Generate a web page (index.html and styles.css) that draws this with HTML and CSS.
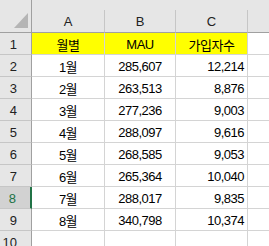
FILE: index.html
```html
<!DOCTYPE html>
<html lang="ko">
<head>
    <meta charset="UTF-8">
    <title>월별 MAU</title>
    <link rel="stylesheet" href="styles.css">
</head>
<body>
    <div class="sheet">
        <div class="corner">
            <svg width="14" height="15" viewBox="0 0 14 15"><polygon points="14,0 14,15 0,15" fill="#b5b5b5"/></svg>
        </div>
        <div class="colhead">A</div>
        <div class="colhead">B</div>
        <div class="colhead">C</div>
        <div class="colhead last"></div>

        <div class="rowhead">1</div>
        <div class="cell title">월별</div>
        <div class="cell title">MAU</div>
        <div class="cell title">가입자수</div>
        <div class="cell last"></div>

        <div class="rowhead">2</div>
        <div class="cell mid">1월</div>
        <div class="cell mid">285,607</div>
        <div class="cell num">12,214</div>
        <div class="cell last"></div>

        <div class="rowhead">3</div>
        <div class="cell mid">2월</div>
        <div class="cell mid">263,513</div>
        <div class="cell num">8,876</div>
        <div class="cell last"></div>

        <div class="rowhead">4</div>
        <div class="cell mid">3월</div>
        <div class="cell mid">277,236</div>
        <div class="cell num">9,003</div>
        <div class="cell last"></div>

        <div class="rowhead">5</div>
        <div class="cell mid">4월</div>
        <div class="cell mid">288,097</div>
        <div class="cell num">9,616</div>
        <div class="cell last"></div>

        <div class="rowhead">6</div>
        <div class="cell mid">5월</div>
        <div class="cell mid">268,585</div>
        <div class="cell num">9,053</div>
        <div class="cell last"></div>

        <div class="rowhead">7</div>
        <div class="cell mid">6월</div>
        <div class="cell mid">265,364</div>
        <div class="cell num">10,040</div>
        <div class="cell last"></div>

        <div class="rowhead active">8</div>
        <div class="cell mid">7월</div>
        <div class="cell mid">288,017</div>
        <div class="cell num">9,835</div>
        <div class="cell last"></div>

        <div class="rowhead">9</div>
        <div class="cell mid">8월</div>
        <div class="cell mid">340,798</div>
        <div class="cell num">10,374</div>
        <div class="cell last"></div>

        <div class="rowhead">10</div>
        <div class="cell"></div>
        <div class="cell"></div>
        <div class="cell"></div>
        <div class="cell last"></div>
    </div>
</body>
</html>
```

FILE: styles.css
```css
html, body {
    margin: 0;
    padding: 0;
    background: #ffffff;
    overflow: hidden;
}
.sheet {
    display: grid;
    grid-template-columns: 32px 73px 71px 72px 1fr;
    grid-template-rows: 33px repeat(10, 22px);
    width: 269px;
    background: #e6e6e6;
    font-family: "Liberation Sans", "Noto Sans CJK KR", sans-serif;
    font-size: 13px;
    letter-spacing: -0.5px;
    color: #000000;
}
.corner {
    background: #e6e6e6;
    border-right: 1px solid #a0a0a0;
    border-bottom: 1px solid #a0a0a0;
    display: flex;
    justify-content: flex-end;
    align-items: flex-end;
    padding: 0 3px 4px 0;
}
.colhead {
    background: #e6e6e6;
    border-right: 1px solid #c6c6c6;
    border-bottom: 1px solid #a0a0a0;
    margin-top: 10px;
    display: flex;
    align-items: center;
    justify-content: center;
    color: #222222;
    letter-spacing: 0;
}
.colhead.last {
    border-right: none;
}
.rowhead {
    background: #e6e6e6;
    border-right: 1px solid #a0a0a0;
    border-bottom: 1px solid #c6c6c6;
    display: flex;
    align-items: center;
    justify-content: flex-end;
    padding: 1px 14px 0 0;
    color: #222222;
    letter-spacing: 0;
}
.rowhead.active {
    background: #d2d2d2;
    color: #217346;
    border-right: 2px solid #217346;
}
.cell {
    background: #ffffff;
    border-right: 1px solid #d4d4d4;
    border-bottom: 1px solid #d4d4d4;
    display: flex;
    align-items: center;
    padding: 2px 3px 0;
    white-space: nowrap;
}
.cell.last {
    border-right: none;
}
.title {
    background: #ffff00;
    justify-content: center;
}
.mid {
    justify-content: center;
}
.num {
    justify-content: flex-end;
}
```
